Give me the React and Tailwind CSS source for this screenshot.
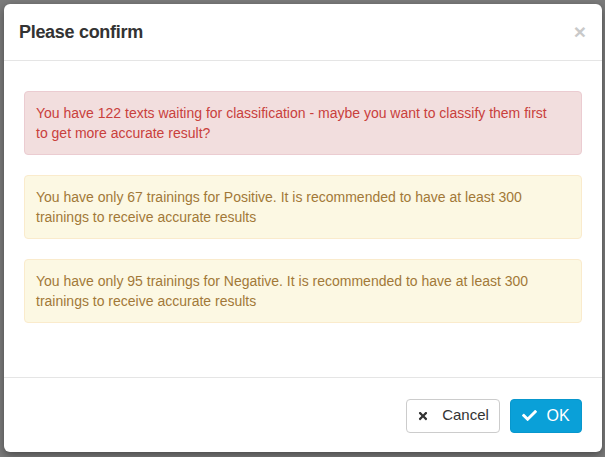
import React from 'react';
import { FaTimes, FaCheck } from 'react-icons/fa';

const font = { fontFamily: '"Liberation Sans", Arial, sans-serif' };

const Alert = ({ tone, children }) => {
    const styles =
        tone === 'danger'
            ? 'bg-[#f2dede] border-[#ebccd1] text-[#c9403c]'
            : 'bg-[#fcf8e3] border-[#faebcc] text-[#a27838]';
    return (
        <div className={`border rounded-[4px] px-[11px] py-[11px] text-[14px] leading-[20px] ${styles}`}>
            {children}
        </div>
    );
};

export default function App() {
    return (
        <div className="w-[605px] h-[457px] bg-[#7b7b7b] overflow-hidden pt-[4px] pl-[4px]" style={font}>
            {/* Modal */}
            <div className="w-[598px] h-[448px] bg-white rounded-[6px] shadow-[0_3px_9px_rgba(0,0,0,0.4)] flex flex-col">
                {/* Header */}
                <div className="h-[57px] flex items-center justify-between px-[15px] border-b border-[#e5e5e5] shrink-0">
                    <h4 className="text-[18px] font-semibold text-[#333] tracking-[-0.3px]">Please confirm</h4>
                    <span className="text-[21px] font-bold leading-none text-[#c9c9c9] mr-[1px] -mt-[2px]">×</span>
                </div>

                {/* Body */}
                <div className="px-[20px] pt-[30px] flex flex-col gap-[20px] flex-1">
                    <Alert tone="danger">
                        You have 122 texts waiting for classification - maybe you want to classify them first
                        <br />
                        to get more accurate result?
                    </Alert>
                    <Alert tone="warning">
                        You have only 67 trainings for Positive. It is recommended to have at least 300 trainings to
                        receive accurate results
                    </Alert>
                    <Alert tone="warning">
                        You have only 95 trainings for Negative. It is recommended to have at least 300 trainings to
                        receive accurate results
                    </Alert>
                </div>

                {/* Footer */}
                <div className="border-t border-[#e5e5e5] h-[75px] shrink-0 flex items-center justify-end gap-[10px] px-[20px] pt-[1px]">
                    <button className="h-[34px] w-[94px] flex items-center justify-center gap-[13px] border border-[#ccc] rounded-[4px] bg-white text-[#333] text-[15px]">
                        <FaTimes className="w-[12px] h-[12px]" />
                        <span>Cancel</span>
                    </button>
                    <button className="h-[34px] w-[72px] flex items-center justify-center gap-[9px] rounded-[4px] bg-[#0aa0d8] border border-[#0897cd] text-white text-[16px]">
                        <FaCheck className="w-[15px] h-[15px]" />
                        <span>OK</span>
                    </button>
                </div>
            </div>
        </div>
    );
}
